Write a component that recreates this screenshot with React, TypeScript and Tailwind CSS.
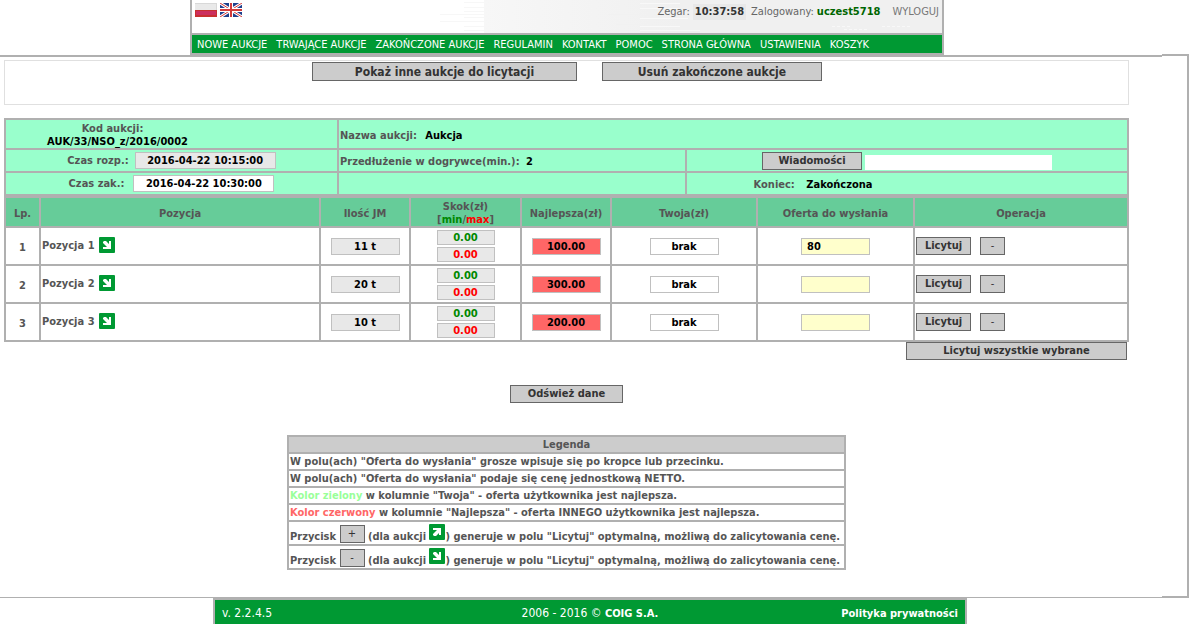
import { useState } from 'react';
import type { ReactNode } from 'react';

const NAV_LINKS = [
  'NOWE AUKCJE',
  'TRWAJĄCE AUKCJE',
  'ZAKOŃCZONE AUKCJE',
  'REGULAMIN',
  'KONTAKT',
  'POMOC',
  'STRONA GŁÓWNA',
  'USTAWIENIA',
  'KOSZYK',
];

const POSITIONS = [
  { id: 1, name: 'Pozycja 1', quantity: '11 t', min: '0.00', max: '0.00', best: '100.00', own: 'brak', offer: '80' },
  { id: 2, name: 'Pozycja 2', quantity: '20 t', min: '0.00', max: '0.00', best: '300.00', own: 'brak', offer: '' },
  { id: 3, name: 'Pozycja 3', quantity: '10 t', min: '0.00', max: '0.00', best: '200.00', own: 'brak', offer: '' },
];

const cell = 'border-2 border-[#b0b0b0] p-0';
const textCell = 'border-2 border-[#b0b0b0] px-px pt-[2px] pb-0';
const legendCell = 'border-2 border-[#b0b0b0] px-px pt-px pb-0 leading-[14px]';
const field = 'border border-[#c0c0c0] text-center font-bold text-black outline-none';

function Button({ className, children }: { className: string; children: ReactNode }) {
  return (
    <button type="button" className={`border border-[#666] bg-[#ccc] text-[#333] ${className}`}>
      {children}
    </button>
  );
}

function ArrowIcon({ up = false, className = '' }: { up?: boolean; className?: string }) {
  return (
    <svg viewBox="0 0 16 16" className={`h-4 w-4 shrink-0 ${className}`} aria-hidden="true">
      <rect width="16" height="16" rx="1" fill="#093" />
      {up ? (
        <path d="M4 11l1 1h2l3-3v2h2V4H4v2h4L4 10z" fill="#fff" />
      ) : (
        <path d="M4 5l1-1h2l3 3V4h2v8H4v-2h4L4 6z" fill="#fff" />
      )}
    </svg>
  );
}

function PolishFlag() {
  return (
    <svg viewBox="0 0 22 14" className="h-[14px] w-[22px]">
      <rect width="22" height="14" fill="#d8d8d8" />
      <rect width="21" height="7" y="1" fill="#e9e9e9" />
      <rect y="7" width="22" height="7" fill="#c8302f" />
      <rect x="1" y="8" width="20" height="4" fill="#cc2f5e" />
    </svg>
  );
}

function BritishFlag() {
  return (
    <svg viewBox="0 0 22 14" className="h-[14px] w-[22px]">
      <rect width="22" height="14" fill="#1f3f8c" />
      <path d="M0 0l22 14M22 0L0 14" stroke="#fff" strokeWidth="3" />
      <path d="M0 0l22 14M22 0L0 14" stroke="#d23a3a" strokeWidth="1" />
      <path d="M11 0v14M0 7h22" stroke="#fff" strokeWidth="4" />
      <path d="M11 0v14M0 7h22" stroke="#d23a3a" strokeWidth="2" />
    </svg>
  );
}

// Faint streaks where the banner fades from white to grey
function BannerStreaks() {
  return (
    <svg viewBox="0 0 750 33" preserveAspectRatio="none" className="absolute inset-0 h-full w-full" aria-hidden="true">
      <path d="M248 14.5h48M248 21.5h48M272 2.5h24M272 7.5h24M272 11.5h24M272 17.5h24M272 26.5h24M272 30.5h24" stroke="#f7f7f7" />
      <path d="M416 14.5h32M424 24.5h24" stroke="#f1f1f1" />
      <path d="M448 3.5h40M448 8.5h40M448 18.5h48M448 26.5h40M448 30.5h60" stroke="#f8f8f8" />
      <path d="M640 26.5h20M652 29.5h24M690 26.5h30" stroke="#f8f8f8" strokeDasharray="3 2" />
    </svg>
  );
}

function Header() {
  return (
    <header className="pr-14">
      <div className="mx-auto max-w-[754px] border-x-2 border-b-2 border-[#b0b0b0]">
        <div className="relative h-[33px] bg-linear-to-r from-white from-39% via-[#f7f7f7] via-39% to-[#f0f0f0] to-65% pt-[3px] pr-[3px] pl-[3px]">
          <BannerStreaks />
          <div className="relative flex items-start justify-between">
            <div className="flex gap-[3px]">
              <a href="#pl" aria-label="Polski"><PolishFlag /></a>
              <a href="#en" aria-label="English"><BritishFlag /></a>
            </div>
            <div className="flex items-center pt-px text-[11px] leading-4 text-[#666]">
              <span>Zegar:</span>
              <span className="ml-[3px] bg-[#e8e8e8] px-[2px] font-bold text-[#333]">10:37:58</span>
              <span className="ml-[5px]">Zalogowany:</span>
              <span className="ml-[3px] font-bold text-[#060]">uczest5718</span>
              <a href="#logout" className="ml-3 text-[#777]">WYLOGUJ</a>
            </div>
          </div>
        </div>
        <nav className="flex h-5 items-center gap-[9px] border-t-2 border-[#b0b0b0] bg-[#093] pl-[5px] text-[11px] whitespace-nowrap text-white">
          {NAV_LINKS.map(label => (
            <a key={label} href="#nav">{label}</a>
          ))}
        </nav>
      </div>
    </header>
  );
}

function AuctionInfo() {
  return (
    <table className="mt-[13px] w-full table-fixed border-collapse bg-[#9fc]">
      <colgroup>
        <col className="w-[333px]" />
        <col className="w-[348px]" />
        <col />
      </colgroup>
      <tbody>
        <tr className="h-[30px]">
          <td className={`${textCell} text-center leading-[13px]`}>
            <div className="pr-[118px]">Kod aukcji:</div>
            <div className="pr-[108px] text-black">AUK/33/NSO_z/2016/0002</div>
          </td>
          <td colSpan={2} className={textCell}>
            Nazwa aukcji: <span className="ml-[5px] text-black">Aukcja</span>
          </td>
        </tr>
        <tr className="h-[23px]">
          <td className={cell}>
            <div className="flex items-center justify-center gap-[6px]">
              <label htmlFor="start">Czas rozp.:</label>
              <input id="start" readOnly value="2016-04-22 10:15:00" className={`${field} h-[17px] w-[141px] bg-[#e8e8e8]`} />
            </div>
          </td>
          <td className={textCell}>
            Przedłużenie w dogrywce(min.): <span className="ml-[3px] text-black">2</span>
          </td>
          <td className={cell}>
            <div className="flex items-end justify-center gap-[3px]">
              <Button className="h-[18px] w-[100px] leading-4 font-bold">Wiadomości</Button>
              <input aria-label="Wiadomości" className="h-[15px] w-[187px] bg-white outline-none" />
            </div>
          </td>
        </tr>
        <tr className="h-[23px]">
          <td className={cell}>
            <div className="flex items-center justify-center gap-[9px]">
              <label htmlFor="end">Czas zak.:</label>
              <input id="end" readOnly value="2016-04-22 10:30:00" className={`${field} h-[17px] w-[141px] bg-white`} />
            </div>
          </td>
          <td className={cell} />
          <td className={`${textCell} text-center`}>
            <div className="pr-[188px]">
              Koniec: <span className="ml-2 text-black">Zakończona</span>
            </div>
          </td>
        </tr>
      </tbody>
    </table>
  );
}

function PositionsTable() {
  const [offers, setOffers] = useState(POSITIONS.map(p => p.offer));

  return (
    <table className="w-full table-fixed border-collapse">
      <colgroup>
        <col className="w-[35px]" />
        <col />
        <col className="w-[90px]" />
        <col className="w-[111px]" />
        <col className="w-[90px]" />
        <col className="w-[146px]" />
        <col className="w-[157px]" />
        <col className="w-[214px]" />
      </colgroup>
      <thead>
        <tr className="h-[30px] bg-[#6c9] leading-[13px]">
          <th className={textCell}>Lp.</th>
          <th className={textCell}>Pozycja</th>
          <th className={textCell}>Ilość JM</th>
          <th className={textCell}>
            Skok(zł)
            <br />
            [<span className="text-[#080]">min</span>/<span className="text-[#f00]">max</span>]
          </th>
          <th className={textCell}>Najlepsza(zł)</th>
          <th className={textCell}>Twoja(zł)</th>
          <th className={textCell}>Oferta do wysłania</th>
          <th className={textCell}>Operacja</th>
        </tr>
      </thead>
      <tbody>
        {POSITIONS.map((p, i) => (
          <tr key={p.id} className="h-[38px] text-center">
            <td className={textCell}>{p.id}</td>
            <td className={cell}>
              <div className="flex items-center gap-1 pb-[2px] pl-px">
                {p.name}
                <ArrowIcon />
              </div>
            </td>
            <td className={cell}>
              <input readOnly aria-label="Ilość JM" value={p.quantity} className={`${field} mx-auto block h-[17px] w-[69px] bg-[#e8e8e8]`} />
            </td>
            <td className={cell}>
              <div className="flex flex-col items-center gap-[2px] font-['DejaVu_Sans'] text-[10px]">
                <input readOnly aria-label="Skok min" value={p.min} className="h-[15px] w-[58px] border border-[#c0c0c0] bg-[#e8e8e8] text-center font-bold text-[#080] outline-none" />
                <input readOnly aria-label="Skok max" value={p.max} className="h-[15px] w-[58px] border border-[#c0c0c0] bg-[#e8e8e8] text-center font-bold text-[#f00] outline-none" />
              </div>
            </td>
            <td className={cell}>
              <input readOnly aria-label="Najlepsza" value={p.best} className={`${field} mx-auto block h-[17px] w-[69px] bg-[#f66]`} />
            </td>
            <td className={cell}>
              <input readOnly aria-label="Twoja" value={p.own} className={`${field} mx-auto block h-[17px] w-[69px] bg-white`} />
            </td>
            <td className={cell}>
              <input
                aria-label="Oferta do wysłania"
                value={offers[i]}
                onChange={e => setOffers(offers.map((o, j) => (j === i ? e.target.value : o)))}
                className="mx-auto block h-[17px] w-[69px] border border-[#c0c0c0] bg-[#ffc] pl-[5px] font-bold text-black outline-none"
              />
            </td>
            <td className={cell}>
              <div className="flex gap-[9px] pl-px">
                <Button className="h-[18px] w-[55px] leading-4 font-bold">Licytuj</Button>
                <Button className="h-[18px] w-[25px] leading-4 font-normal">-</Button>
              </div>
            </td>
          </tr>
        ))}
      </tbody>
    </table>
  );
}

function Legend() {
  return (
    <table className="mx-auto mt-8 w-[559px] border-collapse whitespace-nowrap">
      <thead>
        <tr className="h-[17px] bg-[#ccc]">
          <th className={legendCell}>Legenda</th>
        </tr>
      </thead>
      <tbody>
        <tr className="h-[17px]">
          <td className={legendCell}>W polu(ach) "Oferta do wysłania" grosze wpisuje się po kropce lub przecinku.</td>
        </tr>
        <tr className="h-[17px]">
          <td className={legendCell}>W polu(ach) "Oferta do wysłania" podaje się cenę jednostkową NETTO.</td>
        </tr>
        <tr className="h-[17px]">
          <td className={legendCell}>
            <span className="text-[#9f9]">Kolor zielony</span> w kolumnie "Twoja" - oferta użytkownika jest najlepsza.
          </td>
        </tr>
        <tr className="h-[17px]">
          <td className={legendCell}>
            <span className="text-[#f66]">Kolor czerwony</span> w kolumnie "Najlepsza" - oferta INNEGO użytkownika jest najlepsza.
          </td>
        </tr>
        {['+', '-'].map(sign => (
          <tr key={sign} className="h-6">
            <td className={legendCell}>
              Przycisk <Button className="h-[18px] w-[25px] align-text-bottom leading-4 font-normal">{sign}</Button> (dla aukcji{' '}
              <ArrowIcon up={sign === '+'} className="inline align-baseline" />) generuje w polu "Licytuj" optymalną, możliwą do zalicytowania cenę.
            </td>
          </tr>
        ))}
      </tbody>
    </table>
  );
}

function Footer() {
  return (
    <footer className="pr-[10px]">
      <div className="mx-auto grid h-7 max-w-[754px] grid-cols-3 items-center border-x-2 border-t-2 border-[#b0b0b0] bg-[#093] px-[7px] text-[12px] text-white">
        <span>v. 2.2.4.5</span>
        <span className="text-center">
          2006 - 2016 © <b className="text-[11px]">COIG S.A.</b>
        </span>
        <a href="#privacy" className="text-right text-[11px] font-bold">Polityka prywatności</a>
      </div>
    </footer>
  );
}

export default function App() {
  return (
    <div className="h-screen overflow-hidden bg-white font-['DejaVu_Sans_Condensed','DejaVu_Sans',sans-serif] text-[11px] leading-[15px] text-[#555]">
      <Header />
      <div className="mr-px flex">
        <main className="min-w-0 flex-1 border-t-2 border-b border-[#b0b0b0] pt-[3px] pr-[33px] pb-[27px] pl-1 font-bold">
          <div className="flex h-[45px] items-start justify-center gap-[25px] border border-[#e0e0e0] pt-px pl-px">
            <Button className="h-[19px] w-[265px] text-[12px] leading-4 font-bold">Pokaż inne aukcje do licytacji</Button>
            <Button className="h-[19px] w-[220px] text-[12px] leading-4 font-bold">Usuń zakończone aukcje</Button>
          </div>
          <AuctionInfo />
          <PositionsTable />
          <div className="flex justify-end pr-[2px]">
            <Button className="h-[18px] w-[221px] leading-4 font-bold">Licytuj wszystkie wybrane</Button>
          </div>
          <div className="mt-[25px] flex justify-center">
            <Button className="h-[18px] w-[113px] leading-4 font-bold">Odśwież dane</Button>
          </div>
          <Legend />
        </main>
        <div className="-mt-px w-[27px] border-y-2 border-r-2 border-[#b0b0b0]" />
      </div>
      <Footer />
    </div>
  );
}
